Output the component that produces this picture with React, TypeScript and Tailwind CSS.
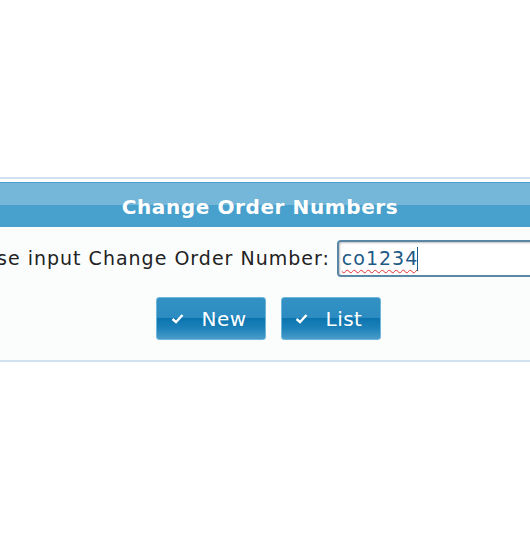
export default function App() {
  return (
    <div className="w-[530px] h-[553px] overflow-hidden bg-white font-['DejaVu_Sans',sans-serif]">
      <div className="pt-[177px]">
        <div className="ml-[-60px] w-[640px] border-t-2 border-b-2 border-[#d0e2ee]">
          <div className="mt-[3px] border-t border-b border-[#4f9fcc] bg-[linear-gradient(#74b7d9_0%,#74b7d9_50%,#48a1cd_52%,#48a1cd_100%)] h-[45px] flex items-center justify-center">
            <span className="text-white font-bold text-[20px] tracking-[0.6px] pt-[4px]">
              Change Order Numbers
            </span>
          </div>
          <div className="bg-[#fbfdfd] pb-[20px]">
            <div className="flex items-center pt-[13px] pl-[13px]">
              <span className="text-[19px] tracking-[1px] text-[#222] whitespace-nowrap">
                Please input Change Order Number:
              </span>
              <div className="ml-[7px] h-[37px] w-[300px] rounded-[4px] border-2 border-[#5b87a6] bg-white shadow-[inset_1px_1px_2px_rgba(0,0,0,0.25)] flex items-center pl-[3px]">
                <span className="text-[19px] tracking-[1px] text-[#1d5a86] underline decoration-wavy decoration-[#e03030] decoration-1 underline-offset-[4px]">
                  co1234
                </span>
                <span className="w-px h-[24px] bg-[#1d5a86] ml-[-1px]" />
              </div>
            </div>
            <div className="flex justify-center gap-[15px] mt-[20px] pl-[16px]">
              <button className="w-[110px] h-[43px] rounded-[3px] border border-[#6fb6dc] bg-[linear-gradient(#3391c4_0%,#2c8cc1_48%,#0b74ae_50%,#1f83ba_75%,#4a9cc9_100%)] text-white text-[20px] tracking-[0.5px] flex items-center pl-[14px]">
                <svg width="13" height="11" viewBox="0 0 13 11" className="mr-[18px]">
                  <path d="M1.5 6 L5 9 L11.5 2" stroke="white" strokeWidth="2.4" fill="none" />
                </svg>
                New
              </button>
              <button className="w-[100px] h-[43px] rounded-[3px] border border-[#6fb6dc] bg-[linear-gradient(#3391c4_0%,#2c8cc1_48%,#0b74ae_50%,#1f83ba_75%,#4a9cc9_100%)] text-white text-[20px] tracking-[0.5px] flex items-center pl-[13px]">
                <svg width="13" height="11" viewBox="0 0 13 11" className="mr-[18px]">
                  <path d="M1.5 6 L5 9 L11.5 2" stroke="white" strokeWidth="2.4" fill="none" />
                </svg>
                List
              </button>
            </div>
          </div>
        </div>
      </div>
    </div>
  );
}
